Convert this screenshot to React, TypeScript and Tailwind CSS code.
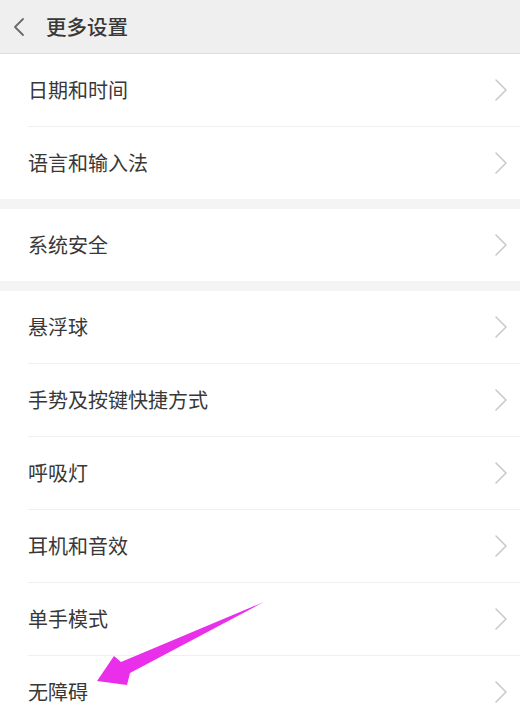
import React from "react";

const groups: string[][] = [
  ["日期和时间", "语言和输入法"],
  ["系统安全"],
  ["悬浮球", "手势及按键快捷方式", "呼吸灯", "耳机和音效", "单手模式", "无障碍"],
];

function Chevron() {
  return (
    <svg width="14" height="24" viewBox="0 0 14 24" className="shrink-0">
      <path d="M2 2 L12 12 L2 22" fill="none" stroke="#c8c8c8" strokeWidth="1.5" strokeLinecap="round" strokeLinejoin="round" />
    </svg>
  );
}

export default function App() {
  return (
    <div
      className="relative w-[520px] h-[718px] overflow-hidden bg-[#f4f4f4]"
      style={{ fontFamily: '"Noto Sans CJK SC", "Noto Sans", sans-serif' }}
    >
      <div className="h-[54px] flex items-center bg-[#efefef] border-b border-[#dedede]">
        <svg width="14" height="20" viewBox="0 0 14 20" className="ml-[12px]">
          <path d="M11 2 L3 10 L11 18" fill="none" stroke="#6a6a6a" strokeWidth="1.8" strokeLinecap="round" strokeLinejoin="round" />
        </svg>
        <span className="ml-[20px] text-[20.5px] text-[#383838] font-medium leading-none">更多设置</span>
      </div>
      <div className="flex flex-col gap-[10px]">
        {groups.map((g, gi) => (
          <div key={gi} className="bg-white flex flex-col">
            {g.map((item, i) => (
              <div key={item} className="flex flex-col">
                {i > 0 && <div className="ml-[28px] h-px bg-[#f0f0f0]" />}
                <div className="h-[72px] flex items-center justify-between pl-[28px] pr-[12px]">
                  <span className="text-[20px] text-[#383838] leading-none">{item}</span>
                  <Chevron />
                </div>
              </div>
            ))}
          </div>
        ))}
      </div>
      <svg className="absolute left-0 top-0 pointer-events-none" width="520" height="718" viewBox="0 0 520 718">
        <polygon
          points="97,681 114,656 121,662 264,602 130,673 127,685"
          fill="#ea2fea"
        />
      </svg>
    </div>
  );
}
